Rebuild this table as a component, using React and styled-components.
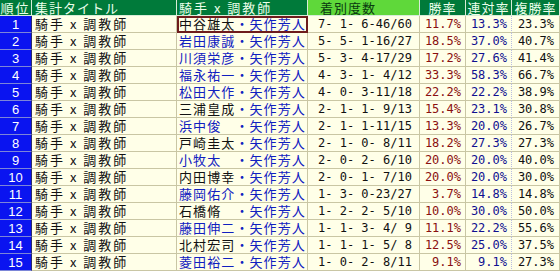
import React from "react";
import styled, { createGlobalStyle } from "styled-components";

const Global = createGlobalStyle`
  html, body { margin: 0; padding: 0; background: #ffffff; }
  body { font-family: "Noto Sans CJK JP", "Noto Sans", sans-serif; }
`;

const JP = `"Noto Sans CJK JP", "Noto Sans", sans-serif`;
const MONO = `"DejaVu Sans Mono", "Liberation Mono", monospace`;

const Table = styled.div`
  display: grid;
  grid-template-columns: 32px 145px 131px 112px 46px 46px 48px;
  grid-template-rows: 16px repeat(15, 17px);
  width: 560px;
  background: #ffffe8;
`;

const Head = styled.div`
  box-sizing: border-box;
  background: ${(p) => (p.$light ? "#5fd83a" : "#007a3a")};
  color: ${(p) => (p.$light ? "#0a3a10" : "#eaffea")};
  border-right: 1px solid #d8ecd8;
  border-bottom: 1px solid #d8ecd8;
  font-family: ${JP};
  font-size: 13px;
  letter-spacing: ${(p) => p.$ls || "1px"};
  line-height: 15px;
  white-space: pre;
  overflow: hidden;
  display: flex;
  align-items: center;
  justify-content: ${(p) => p.$align || "flex-start"};
  padding-left: ${(p) => p.$pl || "0px"};
`;

const Rank = styled.div`
  box-sizing: border-box;
  background: #0a14f0;
  color: #ffffff;
  border-right: 1px solid #2a2a6a;
  border-bottom: 1px solid #7c86d8;
  font-family: "Liberation Sans Narrow", "Liberation Sans", sans-serif;
  font-size: 13px;
  display: flex;
  align-items: center;
  justify-content: center;
`;

const Cell = styled.div`
  box-sizing: border-box;
  border-right: 1px solid #c9c6a4;
  border-bottom: 1px solid #c9c6a4;
  display: flex;
  align-items: center;
  white-space: pre;
  overflow: hidden;
  line-height: 16px;
`;

const Title = styled(Cell)`
  font-family: ${JP};
  font-size: 13px;
  letter-spacing: 2px;
  color: #111;
  padding-left: 3px;
`;

const NameCell = styled(Cell)`
  font-family: ${JP};
  font-size: 13px;
  letter-spacing: 1.1px;
  padding-left: 2px;
  outline: ${(p) => (p.$selected ? "2px solid #6e1c1c" : "none")};
  outline-offset: -2px;
`;

const Jockey = styled.span`
  color: ${(p) => (p.$link ? "#1020c0" : "#111111")};
`;

const Trainer = styled.span`
  color: #1020c0;
`;

const Record = styled(Cell)`
  font-family: ${MONO};
  font-size: 12px;
  color: #111;
  padding-left: 10px;
`;

const Pct = styled(Cell)`
  font-family: ${MONO};
  font-size: 12px;
  justify-content: flex-end;
  padding-right: ${(p) => p.$pr || "4px"};
  color: ${(p) => p.$color};
  border-right-style: ${(p) => (p.$dotted ? "dotted" : "solid")};
  border-right-color: ${(p) => (p.$dotted ? "#b8bce0" : "#c9c6a4")};
`;

const rows = [
  ["中谷雄太", false, "7- 1- 6-46/60", "11.7%", "13.3%", "23.3%"],
  ["岩田康誠", true, "5- 5- 1-16/27", "18.5%", "37.0%", "40.7%"],
  ["川須栄彦", true, "5- 3- 4-17/29", "17.2%", "27.6%", "41.4%"],
  ["福永祐一", true, "4- 3- 1- 4/12", "33.3%", "58.3%", "66.7%"],
  ["松田大作", true, "4- 0- 3-11/18", "22.2%", "22.2%", "38.9%"],
  ["三浦皇成", false, "2- 1- 1- 9/13", "15.4%", "23.1%", "30.8%"],
  ["浜中俊\u3000", true, "2- 1- 1-11/15", "13.3%", "20.0%", "26.7%"],
  ["戸崎圭太", false, "2- 1- 0- 8/11", "18.2%", "27.3%", "27.3%"],
  ["小牧太\u3000", true, "2- 0- 2- 6/10", "20.0%", "20.0%", "40.0%"],
  ["内田博幸", false, "2- 0- 1- 7/10", "20.0%", "20.0%", "30.0%"],
  ["藤岡佑介", true, "1- 3- 0-23/27", "3.7%", "14.8%", "14.8%"],
  ["石橋脩\u3000", false, "1- 2- 2- 5/10", "10.0%", "30.0%", "50.0%"],
  ["藤田伸二", true, "1- 1- 3- 4/ 9", "11.1%", "22.2%", "55.6%"],
  ["北村宏司", false, "1- 1- 1- 5/ 8", "12.5%", "25.0%", "37.5%"],
  ["菱田裕二", true, "1- 0- 2- 8/11", "9.1%", "9.1%", "27.3%"],
];

export default function App() {
  return (
    <>
      <Global />
      <Table>
        <Head $align="center" $ls="2px">順位</Head>
        <Head $pl="3px" $ls="1px">集計タイトル</Head>
        <Head $pl="2px" $ls="2px">騎手 x 調教師</Head>
        <Head $light $pl="12px" $ls="1px">着別度数</Head>
        <Head $align="center">勝率</Head>
        <Head $align="center">連対率</Head>
        <Head $align="center">複勝率</Head>
        {rows.map((r, i) => (
          <React.Fragment key={i}>
            <Rank>{i + 1}</Rank>
            <Title>騎手 x 調教師</Title>
            <NameCell $selected={i === 0}>
              <Jockey $link={r[1]}>{r[0]}</Jockey>
              <Trainer>・矢作芳人</Trainer>
            </NameCell>
            <Record>{r[2]}</Record>
            <Pct $color="#8a1010">{r[3]}</Pct>
            <Pct $color="#101090" $dotted>{r[4]}</Pct>
            <Pct $color="#111111" $pr="5px">{r[5]}</Pct>
          </React.Fragment>
        ))}
      </Table>
    </>
  );
}
